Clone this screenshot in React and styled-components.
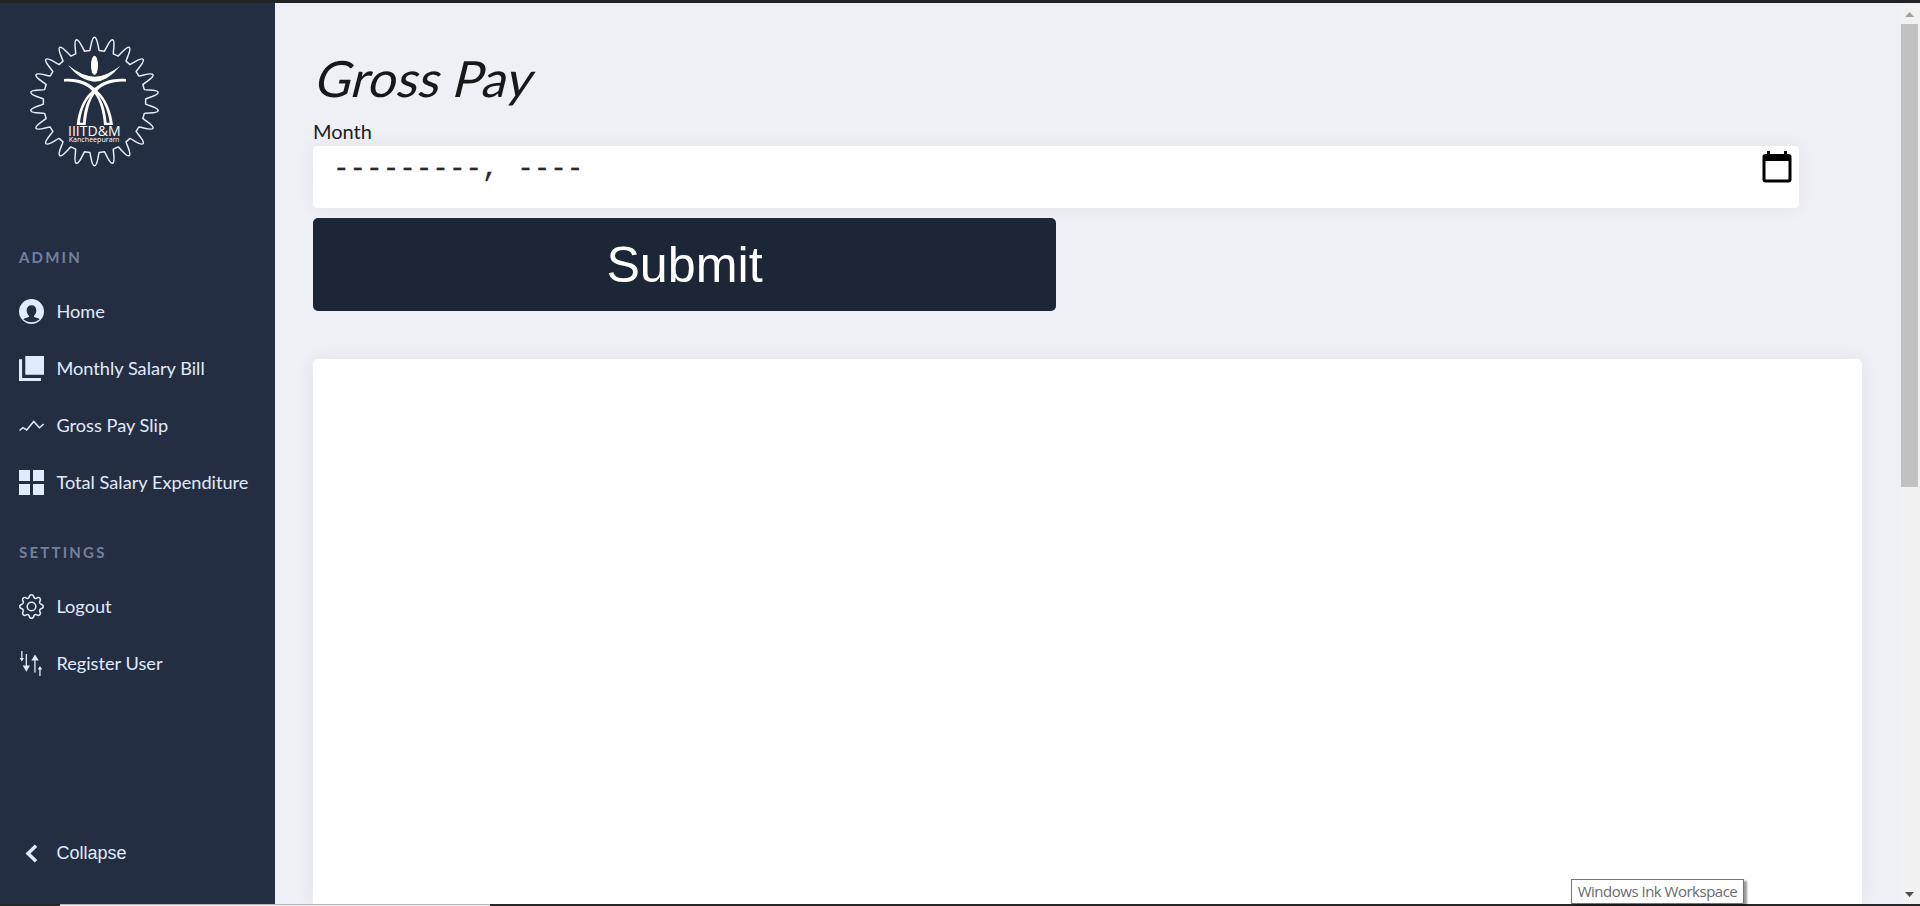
import React from "react";
import styled, { createGlobalStyle } from "styled-components";
import { BsGear } from "react-icons/bs";

const GlobalStyle = createGlobalStyle`
  * { box-sizing: border-box; }
  body { margin: 0; overflow: hidden; font-family: Lato, "Liberation Sans", sans-serif; }
`;

const Screen = styled.div`
  position: relative;
  display: flex;
  flex-direction: column;
  height: 906px;
  width: 1920px;
  overflow: hidden;
  background: #eff0f6;
`;

const TopEdge = styled.div`
  flex: 0 0 3px;
  background: #222326;
`;

const BottomEdge = styled.div`
  flex: 0 0 2px;
  display: flex;
  padding-left: 60px;
  background: #252628;
`;

const BottomStrip = styled.div`
  width: 430px;
  background: #f0f0f2;
  border-top: 1px solid #b5b6ba;
`;

const Body = styled.div`
  flex: 1;
  min-height: 0;
  display: flex;
`;

const Sidebar = styled.aside`
  flex: 0 0 275px;
  display: flex;
  flex-direction: column;
  padding: 28px 19px 0;
  background: #242e42;
  color: #e0ebfd;
`;

const Logo = styled.svg`
  width: 141px;
  height: 141px;
  margin-left: 5px;
`;

const SectionTitle = styled.h2`
  margin: ${(p) => p.$top}px 0 0;
  height: 20px;
  font-size: 15px;
  line-height: 20px;
  font-weight: 700;
  letter-spacing: 2.2px;
  color: #72809d;
`;

const Menu = styled.nav`
  display: flex;
  flex-direction: column;
  gap: 32px;
  margin-top: 32px;
`;

const MenuItem = styled.a`
  display: flex;
  align-items: center;
  gap: 12.4px;
  height: 25px;
  font-size: 18.2px;
  line-height: 25px;
  white-space: nowrap;
  svg { flex: 0 0 25px; width: 25px; height: 25px; }
`;

const CollapseItem = styled(MenuItem)`
  margin-top: auto;
  margin-bottom: 38px;
  font-size: 18px;
  font-family: "Liberation Sans", Arial, sans-serif;
`;

const Content = styled.main`
  flex: 1;
  display: flex;
  flex-direction: column;
  align-items: flex-start;
  padding: 45px 39px 0 38px;
`;

const Title = styled.h1`
  margin: 0;
  height: 67px;
  font-size: 50px;
  line-height: 60px;
  font-weight: 400;
  color: #17181a;
  transform: skewX(-14deg);
  transform-origin: 0 48px;
`;

const Label = styled.label`
  height: 31px;
  font-size: 20px;
  line-height: 33px;
  color: #1c1d20;
`;

const MonthField = styled.div`
  width: 1486px;
  height: 62px;
  display: flex;
  padding: 5px 7px 0 20px;
  border-radius: 4px;
  background: #fff;
  box-shadow: 0 0 20px rgba(0, 0, 0, 0.05);
  color: #2a2a2a;
  font-family: "Liberation Mono", monospace;
  font-size: 27.6px;
  line-height: 36px;
  -webkit-text-stroke: 0.3px #2a2a2a;
  white-space: pre;
  svg { width: 30px; height: 32px; margin-left: auto; }
`;

const YearPart = styled.span`
  margin-left: 2px;
`;

const SubmitButton = styled.button`
  width: 743px;
  height: 93px;
  margin: 10px 0 48px;
  padding: 0;
  border: 0;
  border-radius: 5px;
  background: #1d2637;
  color: #fff;
  font: 50.2px "Liberation Sans", Arial, sans-serif;
`;

const Card = styled.section`
  flex: 1;
  width: 1549px;
  border-radius: 5px 5px 0 0;
  background: #fff;
  box-shadow: 0 0 20px rgba(0, 0, 0, 0.06);
`;

const Scrollbar = styled.div`
  flex: 0 0 19px;
  display: flex;
  flex-direction: column;
  justify-content: space-between;
  background: #f1f1f1;
`;

const Thumb = styled.div`
  width: 17px;
  height: 463px;
  margin-bottom: auto;
  background: #c1c1c1;
`;

const Arrow = styled.svg`
  width: 17px;
  height: 21px;
`;

const Tooltip = styled.div`
  position: absolute;
  left: 1571px;
  top: 879px;
  width: 173px;
  height: 25px;
  border: 1px solid #767676;
  background: #fff;
  box-shadow: 3px 2px 2px rgba(0, 0, 0, 0.4);
  color: #6b6b6b;
  font: 15px/23px "Open Sans", "Noto Sans", sans-serif;
  text-align: center;
  white-space: nowrap;
  letter-spacing: -0.5px;
`;

const TEETH = 22;

function gearPath(cx, cy) {
  const point = (deg, across, radius) => {
    const a = (deg * Math.PI) / 180;
    const x = cx + Math.sin(a) * radius + Math.cos(a) * across;
    const y = cy - Math.cos(a) * radius + Math.sin(a) * across;
    return `${x.toFixed(1)} ${y.toFixed(1)}`;
  };
  let d = "";
  for (let i = 0; i < TEETH; i += 1) {
    const t = (i * 360) / TEETH;
    d += `${i ? "L" : "M"}${point(t, -14, 153)}`;
    d += `C${point(t, -10, 166)} ${point(t, -9, 193)} ${point(t, 0, 193)}`;
    d += `C${point(t, 9, 193)} ${point(t, 10, 166)} ${point(t, 14, 153)}`;
  }
  return `${d}Z`;
}

const InstituteLogo = () => (
  <Logo viewBox="72 93 423 423" fill="#fff">
    <path d={gearPath(283.5, 304.5)} fill="none" stroke="#e6edf8" strokeWidth="4.5" strokeLinejoin="round" />
    <ellipse cx="283.5" cy="196" rx="10.5" ry="29" />
    <path d="M204 195Q245 229 284 230Q321 229 361 197Q323 244 284 245Q242 243 204 195Z" />
    <path d="M192 237C235 233 264 247 284 264C304 247 333 233 378 237V245C338 243 310 254 292 272C318 295 334 332 339 375H312C309 334 299 301 284 281C269 301 260 334 257 375H230C235 332 249 296 276 272C257 254 231 243 192 245Z" />
    <path d="M274 284C253 306 243 338 240 368H249C251 337 258 307 274 284ZM294 284C314 306 325 338 329 368H320C317 337 310 307 294 284Z" fill="#242e42" />
    <text x="204" y="409" fontFamily="Open Sans" fontWeight="400" fontSize="42" textLength="158" lengthAdjust="spacingAndGlyphs">IIITD&amp;M</text>
    <text x="206" y="427" fontFamily="Open Sans" fontSize="22" textLength="152" lengthAdjust="spacingAndGlyphs">Kancheepuram</text>
  </Logo>
);

const UserIcon = () => (
  <svg viewBox="0 0 75 75" fill="currentColor">
    <path fillRule="evenodd" d="M37.500 0A37.500 37.500 0 1 0 37.500 75A37.500 37.500 0 1 0 37.500 0ZM37.500 19C47 19 52 25 52 34C52 42 49 47 45 51V53C46 56 57 55 62 61C55 67 47 70 37.500 70C28 70 20 67 13 61C18 55 29 56 30 53V51C26 47 23 42 23 34C23 25 28 19 37.500 19Z" />
  </svg>
);

const LayersIcon = () => (
  <svg viewBox="0 0 25 25" fill="currentColor">
    <path d="M6.300 0H25V18.700H6.300ZM0 3.200H3.100V21.900H21.900V25H0Z" />
  </svg>
);

const TrendIcon = () => (
  <svg viewBox="0 0 25 25" fill="none" stroke="currentColor" strokeWidth="1.500">
    <path d="M.5 17.500L4 14.700L7.700 17L14.700 8.500L20.400 14.700L24.700 11" />
  </svg>
);

const GridIcon = () => (
  <svg viewBox="0 0 25 25" fill="currentColor">
    <path d="M0 0H11V11H0ZM14 0H25V11H14ZM0 14H11V25H0ZM14 14H25V25H14Z" />
  </svg>
);

const ArrowsIcon = () => (
  <svg viewBox="0 0 25 25" fill="currentColor">
    <path d="M2.200 0H3.500V7H5L2.800 10.500L.7 7H2.200ZM6.700 3H8V14.500H11L7.400 20.700L3.700 14.500H6.700ZM15.300 21.500H16.600V9.500H19.800L16 3.500L12.300 9.500H15.300ZM20.300 25H21.600V18.500H23.200L21 15L18.700 18.500H20.300Z" />
  </svg>
);

const ChevronIcon = () => (
  <svg viewBox="0 0 25 25" fill="none" stroke="currentColor" strokeWidth="3.500">
    <path d="M17 4.800L9 12.500L17 20.200" />
  </svg>
);

const CalendarIcon = () => (
  <svg viewBox="0 0 30 32">
    <path fillRule="evenodd" d="M5 0H8V3H22V0H25V3H26.500Q29.500 3 29.500 6V28.500Q29.500 31.500 26.500 31.500H3.500Q.5 31.500 .5 28.500V6Q.5 3 3.500 3H5ZM3.500 10V28.500H26.500V10Z" />
  </svg>
);

const adminItems = [
  ["Home", UserIcon],
  ["Monthly Salary Bill", LayersIcon],
  ["Gross Pay Slip", TrendIcon],
  ["Total Salary Expenditure", GridIcon],
];

const settingsItems = [
  ["Logout", BsGear],
  ["Register User", ArrowsIcon],
];

const MenuList = ({ items }) => (
  <Menu>
    {items.map(([label, Icon]) => (
      <MenuItem key={label}>
        <Icon />
        {label}
      </MenuItem>
    ))}
  </Menu>
);

export default function App() {
  return (
    <Screen>
      <GlobalStyle />
      <TopEdge />
      <Body>
        <Sidebar>
          <InstituteLogo />
          <SectionTitle $top={75}>ADMIN</SectionTitle>
          <MenuList items={adminItems} />
          <SectionTitle $top={47}>SETTINGS</SectionTitle>
          <MenuList items={settingsItems} />
          <CollapseItem>
            <ChevronIcon />
            Collapse
          </CollapseItem>
        </Sidebar>
        <Content>
          <Title>Gross Pay</Title>
          <Label>Month</Label>
          <MonthField>
            <span>{"---------, "}</span>
            <YearPart>----</YearPart>
            <CalendarIcon />
          </MonthField>
          <SubmitButton>Submit</SubmitButton>
          <Card />
        </Content>
        <Scrollbar>
          <Arrow viewBox="0 0 17 21"><path d="M4 14L8.500 9L13 14Z" fill="#a0a0a0" /></Arrow>
          <Thumb />
          <Arrow viewBox="0 0 17 21"><path d="M4 9L8.500 14L13 9Z" fill="#505050" /></Arrow>
        </Scrollbar>
      </Body>
      <BottomEdge>
        <BottomStrip />
      </BottomEdge>
      <Tooltip>Windows Ink Workspace</Tooltip>
    </Screen>
  );
}
